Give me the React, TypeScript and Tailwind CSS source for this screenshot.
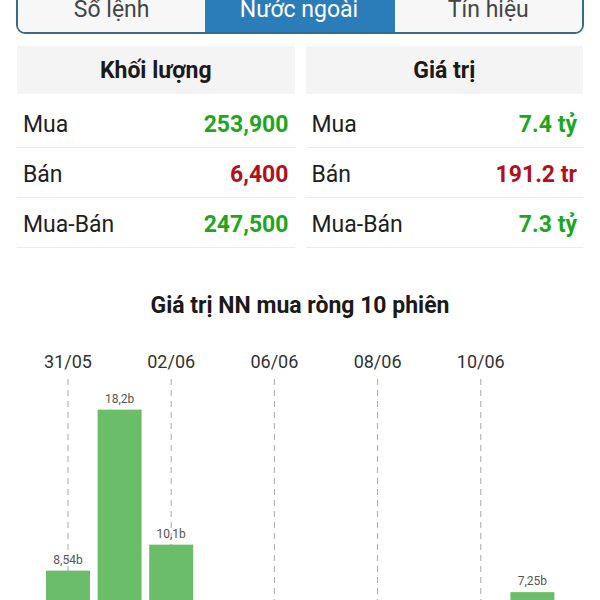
import React from 'react';

const tabs = [
    { label: 'Sổ lệnh', active: false },
    { label: 'Nước ngoài', active: true },
    { label: 'Tín hiệu', active: false },
];

const volume = [
    { label: 'Mua', value: '253,900', up: true },
    { label: 'Bán', value: '6,400', up: false },
    { label: 'Mua-Bán', value: '247,500', up: true },
];

const amount = [
    { label: 'Mua', value: '7.4 tỷ', up: true },
    { label: 'Bán', value: '191.2 tr', up: false },
    { label: 'Mua-Bán', value: '7.3 tỷ', up: true },
];

// net foreign buy, 10 sessions (billion)
const sessions = [8.54, 18.2, 10.1, 0, 0, 0, 0, 0, 0, 7.25];
const labels = ['8,54b', '18,2b', '10,1b', '', '', '', '', '', '', '7,25b'];
const dates = ['31/05', '02/06', '06/06', '08/06', '10/06'];

function StatTable({ title, rows }: { title: string; rows: typeof volume }) {
    return (
        <div className="flex flex-col">
            <div className="h-[48px] bg-[#f4f4f4] flex items-center justify-center pt-[2px] text-[23px] font-bold text-[#1a1a1a]">
                {title}
            </div>
            <div className="mt-[4px]">
                {rows.map((r) => (
                    <div
                        key={r.label}
                        className="h-[50px] flex items-center justify-between px-[6px] pt-[5px] border-b border-[#ececec]"
                    >
                        <span className="text-[23px] text-[#1f1f1f]">{r.label}</span>
                        <span
                            className={
                                r.up
                                    ? 'text-[23px] font-bold text-[#1ea61e]'
                                    : 'text-[23px] font-bold text-[#b01020]'
                            }
                        >
                            {r.value}
                        </span>
                    </div>
                ))}
            </div>
        </div>
    );
}

function NetChart() {
    // page y offset of the svg is 340; zero line sits below the fold
    const zero = 373;
    const scale = 16.67;
    return (
        <svg width="600" height="260" viewBox="0 0 600 260" className="block">
            {dates.map((d, i) => {
                const x = 68 + i * 103.2;
                return (
                    <g key={d}>
                        <text x={x} y={28} textAnchor="middle" fontSize="18" fill="#333" fontFamily="Roboto, sans-serif">
                            {d}
                        </text>
                        <line x1={x} y1={39} x2={x} y2={260} stroke="#a8a8a8" strokeWidth="1" strokeDasharray="6 5" />
                    </g>
                );
            })}
            {sessions.map((v, i) => {
                if (!v) return null;
                const cx = 68 + i * 51.6;
                const top = zero - v * scale;
                return (
                    <g key={i}>
                        <rect x={cx - 22} y={top} width={44} height={zero - top} fill="#6cbd69" />
                        <text x={cx} y={top - 7} textAnchor="middle" fontSize="12" fill="#555" fontFamily="Roboto, sans-serif">
                            {labels[i]}
                        </text>
                    </g>
                );
            })}
        </svg>
    );
}

export default function App() {
    return (
        <div className="w-[600px] h-[600px] overflow-hidden bg-white font-['Roboto',sans-serif]">
            {/* Tabs */}
            <div className="mx-[16px] -mt-[12px] h-[46px] flex border-2 border-[#3a6a8c] rounded-b-[9px] overflow-hidden">
                {tabs.map((t, i) => (
                    <div
                        key={t.label}
                        className={
                            t.active
                                ? 'flex-1 flex items-center justify-center pb-[2px] bg-[#2a7db9] text-white text-[23px]'
                                : i === 2
                                  ? 'flex-1 flex items-center justify-center pb-[2px] bg-[#f7f7f7] text-[#444] text-[23px] border-l-2 border-[#2a7db9]'
                                  : 'flex-1 flex items-center justify-center pb-[2px] bg-[#f7f7f7] text-[#444] text-[23px]'
                        }
                    >
                        {t.label}
                    </div>
                ))}
            </div>

            {/* Foreign stats */}
            <div className="grid grid-cols-2 gap-[11px] px-[17px] mt-[12px]">
                <StatTable title="Khối lượng" rows={volume} />
                <StatTable title="Giá trị" rows={amount} />
            </div>

            <div className="mt-[41px] text-center text-[23px] font-bold text-[#1a1a1a]">
                Giá trị NN mua ròng 10 phiên
            </div>

            <div className="mt-[16px]">
                <NetChart />
            </div>
        </div>
    );
}
